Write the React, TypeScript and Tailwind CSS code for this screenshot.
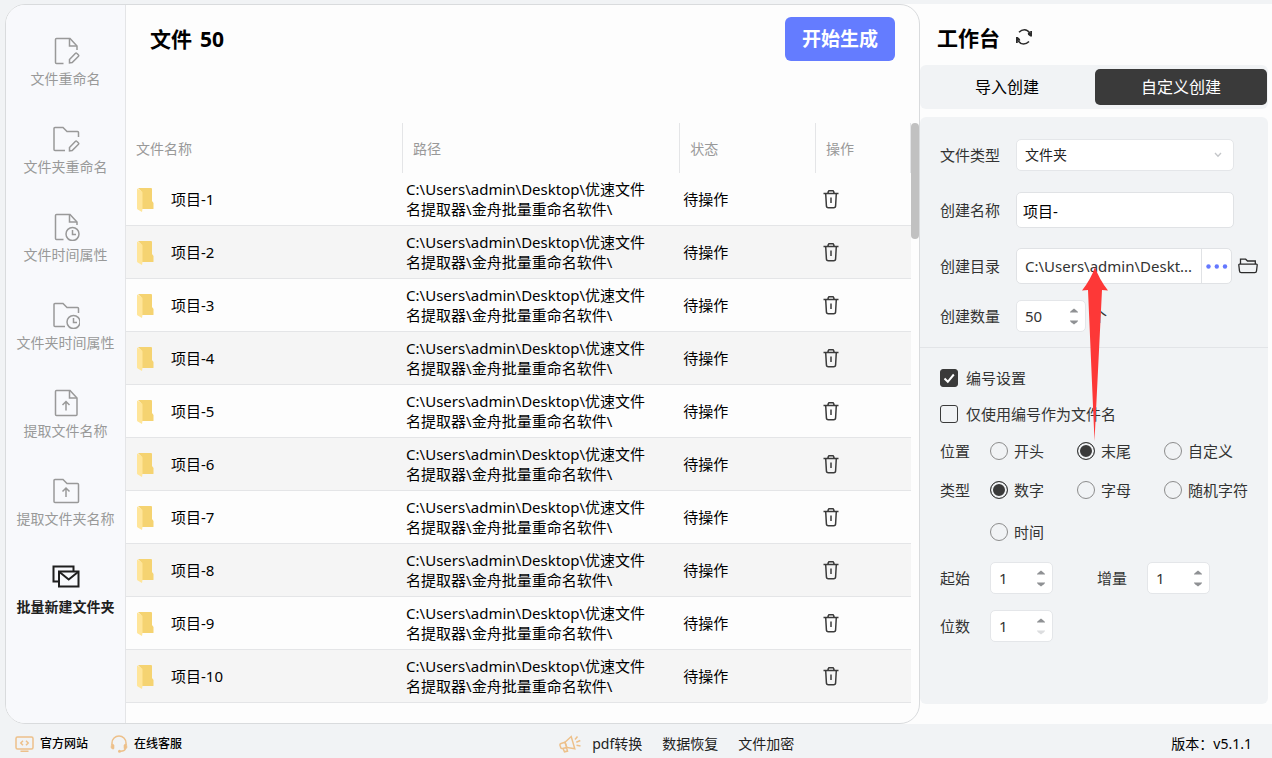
import { useState } from "react";
import type { ReactNode } from "react";

const PATH = "C:\\Users\\admin\\Desktop\\优速文件名提取器\\金舟批量重命名软件\\";

const files = Array.from({ length: 10 }, (_, i) => ({
  name: `项目-${i + 1}`,
  path: PATH,
  status: "待操作",
}));

const FILE_OPEN = "M11.5 26.5H4.5a1 1 0 0 1-1-1v-23a1 1 0 0 1 1-1H18l7 7.5V13";
const FILE_FOLD = "M17.5 1.5v7.5H25";
const FOLDER_OPEN = "M13 25.5H3a1 1 0 0 1-1-1V3.500a1 1 0 0 1 1-1h8l4 4h10.500a1 1 0 0 1 1 1V12";

const PencilMark = () => (
  <path d="M17.500 25.8v-3.300l6-6.300a.8.8 0 0 1 1.200 0l1.800 1.800a.8.8 0 0 1 0 1.200l-6.300 6.300z" />
);

const navItems: { label: string; icon: ReactNode }[] = [
  {
    label: "文件重命名",
    icon: (
      <>
        <path d={FILE_OPEN} />
        <path d={FILE_FOLD} />
        <PencilMark />
      </>
    ),
  },
  {
    label: "文件夹重命名",
    icon: (
      <>
        <path d={FOLDER_OPEN} />
        <PencilMark />
      </>
    ),
  },
  {
    label: "文件时间属性",
    icon: (
      <>
        <path d="M11.500 26.500H4.500a1 1 0 0 1-1-1v-23a1 1 0 0 1 1-1H18l7 7.500V12" />
        <path d={FILE_FOLD} />
        <circle cx="20.500" cy="21" r="6.500" />
        <path d="M20.500 17v4.500H24" />
      </>
    ),
  },
  {
    label: "文件夹时间属性",
    icon: (
      <>
        <path d={FOLDER_OPEN} />
        <circle cx="21.500" cy="21" r="6.500" />
        <path d="M21.500 17v4.500H25" />
      </>
    ),
  },
  {
    label: "提取文件名称",
    icon: (
      <>
        <path d="M4.500 1.500H18l7 7.500v16.500a1 1 0 0 1-1 1H4.500a1 1 0 0 1-1-1v-23a1 1 0 0 1 1-1z" />
        <path d={FILE_FOLD} />
        <path d="M14 21.500v-9M10.500 16l3.500-3.500 3.500 3.500" />
      </>
    ),
  },
  {
    label: "提取文件夹名称",
    icon: (
      <>
        <path d="M3 2.500h8l4 4h10.500a1 1 0 0 1 1 1v17a1 1 0 0 1-1 1H3a1 1 0 0 1-1-1v-21a1 1 0 0 1 1-1z" />
        <path d="M14 20v-9M10.500 14.500L14 11l3.500 3.500" />
      </>
    ),
  },
  {
    label: "批量新建文件夹",
    icon: (
      <>
        <path d="M6 16.500H1.500V1.500h20V6" strokeWidth="2" />
        <path d="M7 6.500h19.500V21.500H7z" strokeWidth="2" />
        <path d="M7.500 7l9.200 7.500L26 7" strokeWidth="2" />
      </>
    ),
  },
];

function FolderIcon() {
  return (
    <svg viewBox="0 0 17 25" className="h-[25px] w-[17px] shrink-0">
      <path d="M1 1h13a1 1 0 0 1 1 1v12l1.500 2v5.500a.5.5 0 0 1-.5.5H4V4z" fill="#f5d371" />
      <path d="M0 1.500L4.500 4a2 2 0 0 1 1 2v16L5 25l-4.300-2.500A1.500 1.500 0 0 1 0 21z" fill="#ffe599" />
    </svg>
  );
}

function TrashIcon() {
  return (
    <svg viewBox="0 0 16 19" className="h-[19px] w-4" fill="none" stroke="#3b3b3b" strokeWidth="1.500">
      <path d="M.5 3.500h15M4.700 3.500l.8-2.200a.6.6 0 0 1 .6-.5h3.800a.6.6 0 0 1 .6.5l.8 2.200" />
      <path d="M2.700 3.500l.7 12.300a2 2 0 0 0 2 2h5.200a2 2 0 0 0 2-2l.7-12.300M8 7.500v5.500" />
    </svg>
  );
}

function Spinner({
  id,
  value,
  onChange,
  className,
  min = 0,
}: {
  id: string;
  value: number;
  onChange: (n: number) => void;
  className: string;
  min?: number;
}) {
  return (
    <div className={`flex h-8 items-center rounded-[5px] border border-[#e4e6e9] bg-white pl-2 pr-[7px] ${className}`}>
      <input
        id={id}
        inputMode="numeric"
        value={value}
        onChange={(e) => onChange(Number(e.target.value) || 0)}
        className="w-full min-w-0 bg-transparent text-[15px] leading-5 outline-none"
      />
      <div className="flex shrink-0 flex-col gap-[7px]">
        <button type="button" aria-label="增加" onClick={() => onChange(value + 1)}>
          <svg viewBox="0 0 8 5" className="block h-[5px] w-2">
            <path d="M0 4.500V4Q.5 3 4 .5Q7.500 3 8 4v.5z" fill="#8f9194" />
          </svg>
        </button>
        <button type="button" aria-label="减少" disabled={value <= min} onClick={() => onChange(value - 1)}>
          <svg viewBox="0 0 8 5" className="block h-[5px] w-2">
            <path d="M0 .5V1Q.5 2 4 4.500Q7.500 2 8 1V.5z" fill={value <= min ? "#dcdddf" : "#8f9194"} />
          </svg>
        </button>
      </div>
    </div>
  );
}

function Radio({
  name,
  label,
  checked,
  onChange,
}: {
  name: string;
  label: string;
  checked: boolean;
  onChange: () => void;
}) {
  return (
    <label className="flex h-5 items-center gap-[6px] whitespace-nowrap">
      <input
        type="radio"
        name={name}
        checked={checked}
        onChange={onChange}
        className="h-[18px] w-[18px] appearance-none rounded-full border border-[#8c8c8c] checked:border-[#3a3a3a] checked:bg-[#3a3a3a] checked:shadow-[inset_0_0_0_2px_#f1f3f5]"
      />
      {label}
    </label>
  );
}

function Check({
  label,
  checked,
  onChange,
}: {
  label: string;
  checked: boolean;
  onChange: () => void;
}) {
  return (
    <label className="flex h-[18px] items-center gap-2">
      <span className="relative flex">
        <input
          type="checkbox"
          checked={checked}
          onChange={onChange}
          className="h-[18px] w-[18px] appearance-none rounded-[3px] border border-[#3a3a3a] checked:bg-[#3a3a3a]"
        />
        {checked && (
          <svg
            viewBox="0 0 18 18"
            className="pointer-events-none absolute inset-0 h-[18px] w-[18px]"
            fill="none"
            stroke="#fff"
            strokeWidth="2"
          >
            <path d="M4.500 9.500l3.300 3.300 6-7.300" />
          </svg>
        )}
      </span>
      {label}
    </label>
  );
}

function Sidebar() {
  const [active, setActive] = useState("批量新建文件夹");

  return (
    <nav className="flex w-[120px] shrink-0 flex-col items-center gap-9 border-r border-[#e4e5e7] bg-[#f8f9fc] pt-8">
      {navItems.map((item) => (
        <button
          key={item.label}
          onClick={() => setActive(item.label)}
          className={`flex flex-col items-center gap-1 whitespace-nowrap text-sm leading-5 ${
            item.label === active ? "font-bold text-[#1f1f1f]" : "text-[#999]"
          }`}
        >
          <svg
            viewBox="0 0 28 28"
            className="h-7 w-7"
            fill="none"
            stroke="currentColor"
            strokeWidth="1.500"
          >
            {item.icon}
          </svg>
          {item.label}
        </button>
      ))}
    </nav>
  );
}

function FileTable() {
  return (
    <div className="flex min-h-0 flex-1 items-start">
      <table className="min-w-0 flex-1 table-fixed border-separate border-spacing-0 text-left text-[15px] leading-5 text-black">
        <thead>
          <tr className="h-[50px] text-sm leading-5 text-[#999]">
            <th className="w-[35.3%] border-r border-[#e4e5e7] px-[10px] pt-[2px] font-normal">文件名称</th>
            <th className="w-[35.3%] border-r border-[#e4e5e7] px-[10px] pt-[2px] font-normal">路径</th>
            <th className="w-[17.3%] border-r border-[#e4e5e7] px-[10px] pt-[2px] font-normal">状态</th>
            <th className="border-r border-[#e4e5e7] px-[10px] pt-[2px] font-normal">操作</th>
          </tr>
        </thead>
        <tbody>
          {files.map((file) => (
            <tr key={file.name} className="h-[53px] even:bg-[#f5f5f5]">
              <td className="border-b border-[#e4e5e7] pl-[11px]">
                <div className="flex items-center gap-[17px]">
                  <FolderIcon />
                  {file.name}
                </div>
              </td>
              <td className="border-b border-[#e4e5e7] pl-[3px] pr-7 break-words">{file.path}</td>
              <td className="border-b border-[#e4e5e7] pl-[3px]">{file.status}</td>
              <td className="border-b border-[#e4e5e7] pl-[7px]">
                <button className="block" aria-label="删除">
                  <TrashIcon />
                </button>
              </td>
            </tr>
          ))}
        </tbody>
      </table>
      <div className="h-[116px] w-2 shrink-0 rounded-full bg-[#c1c1c1]" />
    </div>
  );
}

function Workbench() {
  const [tab, setTab] = useState("自定义创建");
  const [name, setName] = useState("项目-");
  const [count, setCount] = useState(50);
  const [numbering, setNumbering] = useState(true);
  const [onlyNumber, setOnlyNumber] = useState(false);
  const [position, setPosition] = useState("末尾");
  const [kind, setKind] = useState("数字");
  const [start, setStart] = useState(1);
  const [step, setStep] = useState(1);
  const [digits, setDigits] = useState(1);

  return (
    <aside className="flex w-[352px] shrink-0 flex-col pb-5 pr-1">
      <div className="flex h-[61px] items-start gap-4 pl-[17px] pt-5">
        <h2 className="text-[21px] font-bold leading-7 text-black">工作台</h2>
        <button aria-label="刷新" className="pt-1">
          <svg viewBox="0 0 16 18" className="h-[18px] w-4" fill="none" stroke="#2b2b2b" strokeWidth="1.600">
            <path d="M3 4.200Q5.500 1.700 8.500 1.700Q11.500 1.700 13.800 5M13 13.500Q10.500 16 7.500 16Q4.500 16 2.200 13" />
            <path d="M16 3v5.500h-1.700L12 6.800 11.800 5h2.400V3zM0 15V9h1.700L4 11l.2 1.800H1.800V15z" fill="#2b2b2b" stroke="none" />
          </svg>
        </button>
      </div>

      <div className="grid h-11 grid-cols-2 gap-[2px] rounded-md bg-[#f1f3f5] px-px py-1 text-base">
        {["导入创建", "自定义创建"].map((t) => (
          <button
            key={t}
            onClick={() => setTab(t)}
            className={`rounded-[5px] ${t === tab ? "bg-[#3a3a3a] text-white" : "text-black"}`}
          >
            {t}
          </button>
        ))}
      </div>

      <form className="relative mt-2 flex-1 rounded-md bg-[#f1f3f5] text-[15px] leading-5 text-[#333]">
        <div className="flex flex-col px-5 pb-[15px] pt-[22px]">
          <div className="flex h-8 items-center gap-4">
            <label htmlFor="type">文件类型</label>
            <div className="relative w-[218px]">
              <select
                id="type"
                className="h-8 w-full appearance-none rounded-[5px] border border-[#e4e6e9] bg-white pl-2 text-sm leading-5 text-[#222] outline-none"
              >
                <option>文件夹</option>
                <option>文件</option>
              </select>
              <svg
                viewBox="0 0 8 6"
                className="pointer-events-none absolute right-3 top-[13px] h-[6px] w-2"
                fill="none"
                stroke="#c4c6c9"
                strokeWidth="1.300"
              >
                <path d="M1 1l3 3.300L7 1" />
              </svg>
            </div>
          </div>
          <div className="mt-[21px] flex h-9 items-center gap-4">
            <label htmlFor="name">创建名称</label>
            <input
              id="name"
              value={name}
              onChange={(e) => setName(e.target.value)}
              className="h-9 w-[218px] rounded-[5px] border border-[#e0e2e5] bg-white px-[6px] text-black outline-none"
            />
          </div>
          <div className="mt-5 flex h-9 items-center gap-4">
            <label htmlFor="dir" className="shrink-0">创建目录</label>
            <div className="flex h-9 w-[216px] shrink-0 rounded-[5px] border border-[#e0e2e5] bg-white">
              <input
                id="dir"
                readOnly
                value="C:\Users\admin\Deskt..."
                className="min-w-0 flex-1 bg-transparent pl-2 outline-none"
              />
              <button type="button" aria-label="选择目录" className="w-[30px] shrink-0 border-l border-[#e0e2e5]">
                <svg viewBox="0 0 22 5" className="mx-auto h-[5px] w-[22px]" fill="#6478ff">
                  <circle cx="2.500" cy="2.500" r="2.200" />
                  <circle cx="10.800" cy="2.500" r="2.200" />
                  <circle cx="19" cy="2.500" r="2.200" />
                </svg>
              </button>
            </div>
            <button type="button" aria-label="打开目录" className="-ml-[10px] shrink-0">
              <svg viewBox="0 0 20 16" className="h-4 w-5" fill="none" stroke="#2b2b2b" strokeWidth="1.300">
                <path d="M2.500 6V1.200h5.200L9.500 3h7.800v3" />
                <path d="M1.500 6.200h17a.7.7 0 0 1 .7.8l-.7 6a1.800 1.800 0 0 1-1.800 1.700H3.300A1.800 1.800 0 0 1 1.500 13L.8 7a.7.7 0 0 1 .7-.8z" />
              </svg>
            </button>
          </div>
          <div className="mt-4 flex h-8 items-center gap-4">
            <label htmlFor="count">创建数量</label>
            <Spinner id="count" value={count} onChange={setCount} className="w-[70px]" />
            <span className="-ml-[10px]">个</span>
          </div>
        </div>

        <div className="flex flex-col border-t border-[#e2e4e7] px-5 pt-[21px]">
          <Check label="编号设置" checked={numbering} onChange={() => setNumbering(!numbering)} />
          <div className="mt-[18px]">
            <Check
              label="仅使用编号作为文件名"
              checked={onlyNumber}
              onChange={() => setOnlyNumber(!onlyNumber)}
            />
          </div>
          <div className="mt-[18px] flex gap-5">
            <span className="shrink-0">位置</span>
            <div className="grid grid-cols-[87px_87px_87px]">
              {["开头", "末尾", "自定义"].map((p) => (
                <Radio key={p} name="position" label={p} checked={p === position} onChange={() => setPosition(p)} />
              ))}
            </div>
          </div>
          <div className="mt-[19px] flex gap-5">
            <span className="shrink-0">类型</span>
            <div className="grid grid-cols-[87px_87px_87px] gap-y-[22px]">
              {["数字", "字母", "随机字符", "时间"].map((k) => (
                <Radio key={k} name="kind" label={k} checked={k === kind} onChange={() => setKind(k)} />
              ))}
            </div>
          </div>
          <div className="mt-5 flex items-center gap-5">
            <label htmlFor="start">起始</label>
            <Spinner id="start" value={start} onChange={setStart} className="w-[63px]" />
            <label htmlFor="step" className="ml-6">增量</label>
            <Spinner id="step" value={step} onChange={setStep} className="w-[63px]" />
          </div>
          <div className="mt-4 flex items-center gap-5">
            <label htmlFor="digits">位数</label>
            <Spinner id="digits" value={digits} min={1} onChange={setDigits} className="w-[63px]" />
          </div>
        </div>

        <svg
          viewBox="0 0 26 174"
          className="pointer-events-none absolute left-[162px] top-[150px] h-[174px] w-[26px]"
          fill="#fd3837"
        >
          <path d="M13 0Q17 12 26 23.500L20 23L12.500 174L6 23L0 23.500Q9 12 13 0z" />
        </svg>
      </form>
    </aside>
  );
}

function Footer() {
  return (
    <footer className="flex h-[34px] items-center justify-between pl-[15px] pr-5 pt-[6px] text-black">
      <div className="flex items-center gap-[22px] text-xs font-medium">
        <a href="#site" className="flex items-center gap-[6px]">
          <svg viewBox="0 0 19 16" className="h-4 w-[19px]" fill="none" stroke="#edc08a" strokeWidth="1.500">
            <rect x="1" y="1" width="17" height="12" rx="1.500" />
            <path d="M5.500 15.200h8M8 4.800L5.800 7 8 9.200M11 4.800L13.200 7 11 9.200" />
          </svg>
          官方网站
        </a>
        <a href="#service" className="flex items-center gap-[6px]">
          <svg viewBox="0 0 18 18" className="h-[18px] w-[18px]" fill="none" stroke="#edc08a" strokeWidth="1.500">
            <path d="M2 10V8a7 7 0 0 1 14 0v2M15.500 13.500q-1 2.700-5 2.700" />
            <path d="M1.500 9.500q2-.5 2.500.5v3.500q-.5 1-2 .3a2 2 0 0 1-1-1.800zM16.500 9.500q-2-.5-2.500.5v3.500q.5 1 2 .3a2 2 0 0 0 1-1.800z" fill="#edc08a" strokeWidth=".6" />
            <circle cx="9.500" cy="16.300" r="1.500" fill="#edc08a" stroke="none" />
          </svg>
          在线客服
        </a>
      </div>
      <div className="flex items-center gap-5 text-sm text-[#222]">
        <a href="#pdf" className="flex items-center gap-[11px]">
          <svg viewBox="0 0 22 18" className="h-[18px] w-[22px]" fill="none" stroke="#edc08a" strokeWidth="1.500">
            <path d="M6 7.200L12.200 1.500l3.600 12.200-8-1.300z" />
            <path d="M6 7.200L2 8.500a1.500 1.500 0 0 0-1 1.800l.7 2.200a1.500 1.500 0 0 0 1.800 1l4.300-1.100zM4 13.500l1.500 3.300 3-.7-.9-3.200" />
            <path d="M16 4.500l2.500-3M17.300 7.300l4-1.800M17.500 10.300l4 .7" />
          </svg>
          pdf转换
        </a>
        <a href="#recover">数据恢复</a>
        <a href="#encrypt">文件加密</a>
      </div>
      <p className="text-sm">版本：v5.1.1</p>
    </footer>
  );
}

export default function App() {
  return (
    <div className="flex min-h-screen flex-col bg-[#f1f3f5] pt-1 font-['Noto_Sans','Noto_Sans_CJK_SC',sans-serif]">
      <div className="ml-[5px] flex flex-1 rounded-l-[20px] bg-[#fdfdfd]">
        <main className="flex min-w-0 flex-1 overflow-hidden rounded-[20px] border border-[#d9dbdd]">
          <Sidebar />
          <section className="flex min-w-0 flex-1 flex-col">
            <header className="mb-[62px] flex h-14 items-center justify-between px-6 pt-3">
              <h1 className="flex gap-2 pt-[2px] text-[21px] font-bold text-black">
                <span>文件</span>
                <span>50</span>
              </h1>
              <button className="h-11 w-[110px] rounded-md bg-[#647cff] text-[19px] font-bold text-white">
                开始生成
              </button>
            </header>
            <FileTable />
          </section>
        </main>
        <Workbench />
      </div>
      <Footer />
    </div>
  );
}
